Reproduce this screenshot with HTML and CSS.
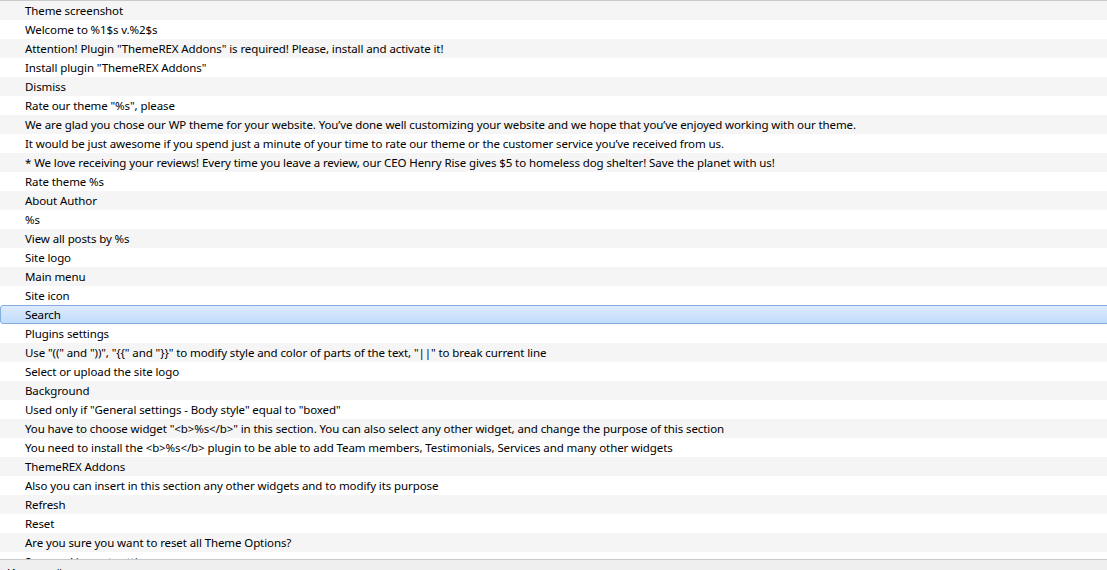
FILE: index.html
```html
<!DOCTYPE html>
<html>
<head>
<meta charset="utf-8">
<link rel="stylesheet" href="styles.css">
</head>
<body>
<div class="app">
  <div class="list">
    <div class="row">Theme screenshot</div>
    <div class="row">Welcome to %1$s v.%2$s</div>
    <div class="row">Attention! Plugin "ThemeREX Addons" is required! Please, install and activate it!</div>
    <div class="row">Install plugin "ThemeREX Addons"</div>
    <div class="row">Dismiss</div>
    <div class="row">Rate our theme "%s", please</div>
    <div class="row">We are glad you chose our WP theme for your website. You’ve done well customizing your website and we hope that you’ve enjoyed working with our theme.</div>
    <div class="row">It would be just awesome if you spend just a minute of your time to rate our theme or the customer service you’ve received from us.</div>
    <div class="row">* We love receiving your reviews! Every time you leave a review, our CEO Henry Rise gives $5 to homeless dog shelter! Save the planet with us!</div>
    <div class="row">Rate theme %s</div>
    <div class="row">About Author</div>
    <div class="row">%s</div>
    <div class="row">View all posts by %s</div>
    <div class="row">Site logo</div>
    <div class="row">Main menu</div>
    <div class="row">Site icon</div>
    <div class="row selected">Search</div>
    <div class="row">Plugins settings</div>
    <div class="row">Use "((" and "))", "{{" and "}}" to modify style and color of parts of the text, "||" to break current line</div>
    <div class="row">Select or upload the site logo</div>
    <div class="row">Background</div>
    <div class="row">Used only if "General settings - Body style" equal to "boxed"</div>
    <div class="row">You have to choose widget "&lt;b&gt;%s&lt;/b&gt;" in this section. You can also select any other widget, and change the purpose of this section</div>
    <div class="row">You need to install the &lt;b&gt;%s&lt;/b&gt; plugin to be able to add Team members, Testimonials, Services and many other widgets</div>
    <div class="row">ThemeREX Addons</div>
    <div class="row">Also you can insert in this section any other widgets and to modify its purpose</div>
    <div class="row">Refresh</div>
    <div class="row">Reset</div>
    <div class="row">Are you sure you want to reset all Theme Options?</div>
    <div class="row">Save and import settings</div>
  </div>
  <div class="pane">Исходный текст:</div>
</div>
</body>
</html>
```

FILE: styles.css
```css
html, body {
  margin: 0;
  padding: 0;
  background: #ffffff;
}
body {
  font-family: "Noto Sans", "Open Sans", sans-serif;
  font-size: 11.5px;
  letter-spacing: -0.1px;
  color: #000000;
  overflow: hidden;
}
.app {
  display: flex;
  flex-direction: column;
  width: 1107px;
  height: 570px;
  overflow: hidden;
}
.list {
  flex: 1;
  overflow: hidden;
  border-top: 1px solid #c9c9c9;
  min-height: 0;
}
.row {
  height: 19px;
  line-height: 18px;
  padding-top: 1px;
  box-sizing: border-box;
  padding-left: 25px;
  white-space: nowrap;
  background: #ffffff;
}
.row:nth-child(odd) {
  background: #f5f5f5;
}
.row.selected {
  background: linear-gradient(#dcebfc, #c2dcfc);
  border: 1px solid #84acdd;
  border-radius: 3px;
  margin-right: -6px;
  padding-left: 24px;
  padding-top: 0;
  line-height: 17px;
}
.pane {
  box-sizing: border-box;
  height: 11px;
  flex: none;
  border-top: 1px solid #c9c9c9;
  background: #efefef;
  padding-left: 7px;
  padding-top: 3px;
  line-height: 19px;
  overflow: hidden;
}
```
